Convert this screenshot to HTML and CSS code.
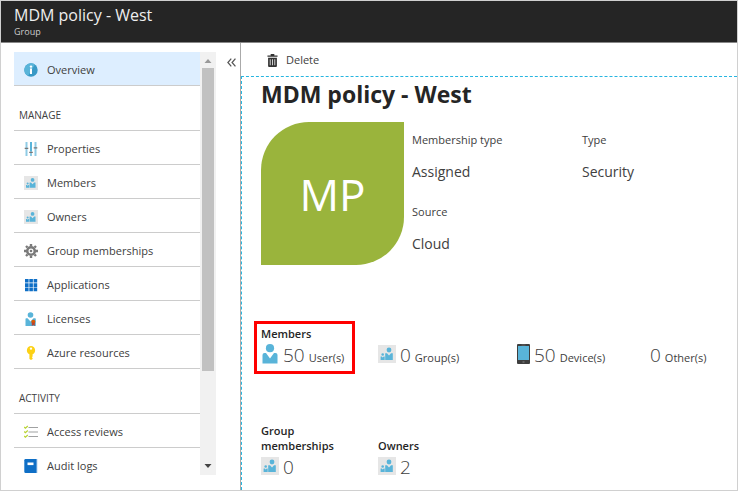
FILE: index.html
```html
<!DOCTYPE html>
<html lang="en">
<head>
<meta charset="utf-8">
<title>MDM policy - West</title>
<link rel="stylesheet" href="styles.css">
</head>
<body>
<svg class="defs" aria-hidden="true">
  <symbol id="people" viewBox="0 0 18 18">
    <path fill="#e6e6e6" d="M0 0h18v18H0z"/>
    <circle cx="11" cy="5" r="2.400" fill="#59b4d9"/>
    <path fill="#59b4d9" d="M7.200 8.200h1.800L11 10.600l2-2.400h1.800V15H7.200z"/>
    <circle cx="4.700" cy="9.500" r="1.300" fill="#59b4d9"/>
    <path fill="#59b4d9" d="M2.600 11.500h1.200L4.700 12.600l1-1.100h1V15H2.600z"/>
  </symbol>
  <symbol id="user" viewBox="0 0 16 20">
    <circle cx="8" cy="4.200" r="4.100" fill="#59b4d9"/>
    <path fill="#59b4d9" d="M.5 11q0-2 2-2H4l4 5.500L12 9h1.500q2 0 2 2v8.500H.5z"/>
  </symbol>
</svg>
<div class="app">
  <header class="top">
    <h1 class="top-title">MDM policy - West</h1>
    <p class="top-sub">Group</p>
  </header>
  <div class="body">
    <aside class="side">
      <nav class="menu">
        <a class="item active" href="#overview"><svg class="icon" viewBox="0 0 14 14"><circle cx="7" cy="7" r="6.700" fill="#3999c6"/><path fill="#59b4d9" d="M2 2.500A6.700 6.700 0 0 1 11 1.600L4 13A6.700 6.700 0 0 1 2 2.500z"/><circle cx="7" cy="3.600" r="1.200" fill="#fff"/><path fill="#fff" d="M6 5.500h2v5.500H6z"/></svg>Overview</a>
        <h2 class="group">MANAGE</h2>
        <a class="item" href="#properties"><svg class="icon" viewBox="0 0 14 14"><path fill="#8fcbe5" d="M1.500 0h2v14h-2zM6 0h2v14H6zM10.500 0h2v14h-2z"/><path fill="#59b4d9" d="M6 0h2v9H6z"/><path fill="#777" d="M.7 5.800h3.600v1.100H.7zM5.200 9.800h3.600v1.100H5.200zM9.700 5.300h3.600v1.100H9.700z"/></svg>Properties</a>
        <a class="item" href="#members"><svg class="icon"><use href="#people"/></svg>Members</a>
        <a class="item" href="#owners"><svg class="icon"><use href="#people"/></svg>Owners</a>
        <a class="item" href="#group-memberships"><svg class="icon" viewBox="0 0 14 14"><g fill="none" stroke="#7a7a7a"><circle cx="7" cy="7" r="3.800" stroke-width="2.600"/><path stroke-width="2.400" d="M7 0v2M7 12v2M0 7h2M12 7h2M2 2l1.500 1.500M10.500 10.500L12 12M12 2l-1.500 1.500M3.500 10.500L2 12"/></g><circle cx="7" cy="7" r="1.300" fill="#7a7a7a"/></svg>Group memberships</a>
        <a class="item" href="#applications"><svg class="icon" viewBox="0 0 14 14"><path fill="#0f6fc6" d="M1 1h3.600v3.600H1zM5.300 1h3.600v3.600H5.300zM9.600 1h3.600v3.600H9.600zM1 5.300h3.600v3.600H1zM5.300 5.300h3.600v3.600H5.300zM9.600 5.300h3.600v3.600H9.600zM1 9.600h3.600v3.600H1zM5.300 9.600h3.600v3.600H5.300zM9.600 9.600h3.600v3.600H9.600z"/></svg>Applications</a>
        <a class="item" href="#licenses"><svg class="icon" viewBox="0 0 14 14"><circle cx="6.500" cy="3" r="2.800" fill="#59b4d9"/><path fill="#59b4d9" d="M1.500 7q0-.8.800-.8h1.200L6.500 9.500 9.500 6.200H11q.8 0 .8.800v7H1.500z"/><circle cx="9.300" cy="9.700" r="2" fill="#dd5900"/><path fill="#b8432f" d="M7.800 10.500h3V14l-1.500-1-1.500 1z"/></svg>Licenses</a>
        <a class="item" href="#azure-resources"><svg class="icon" viewBox="0 0 14 14"><path fill="#fcd116" fill-rule="evenodd" d="M7 0a4.300 4.300 0 0 0-1.600 8.200V13L7 14l1.600-1v-1l-.8-.8.8-.8V8.200A4.300 4.300 0 0 0 7 0zm0 1.400a1.200 1.200 0 1 1 0 2.400 1.200 1.200 0 0 1 0-2.400z"/></svg>Azure resources</a>
        <h2 class="group">ACTIVITY</h2>
        <a class="item" href="#access-reviews"><svg class="icon" viewBox="0 0 14 14"><path fill="none" stroke="#a0a1a2" stroke-width="1.200" d="M4.500 2.500H14M4.500 7H14M4.500 11.500H14"/><path fill="none" stroke="#b8d432" stroke-width="1.200" d="M.2 2l1.200 1.200L3.800 1M.2 6.500l1.200 1.200 2.400-2.200M.2 11l1.200 1.200L3.800 10"/></svg>Access reviews</a>
        <a class="item" href="#audit-logs"><svg class="icon" viewBox="0 0 14 14"><path fill="#0f6fc6" d="M1.500 0H13v14H1.500q-1.200 0-1.200-1.200V1.200Q.3 0 1.500 0z"/><path fill="#5c9cd8" d="M12 0h1.200v14H12z"/><path fill="#fff" d="M3.500 3.500h6v2.600h-6z"/></svg>Audit logs</a>
      </nav>
      <div class="scroll" aria-hidden="true">
        <svg class="arrow" viewBox="0 0 16 16"><path fill="#999" d="M4.500 11h7L8 7z"/></svg>
        <div class="thumb"></div>
        <svg class="arrow" viewBox="0 0 16 16"><path fill="#444" d="M4.500 5h7L8 9z"/></svg>
      </div>
      <button class="collapse" type="button" aria-label="Collapse menu"><svg class="chevrons" viewBox="0 0 8 8"><path fill="none" stroke="#555" stroke-width="1.100" d="M3.800.5L.8 4l3 3.500M7.500.5l-3 3.500 3 3.500"/></svg></button>
    </aside>
    <main class="main">
      <div class="toolbar">
        <button class="delete" type="button"><svg class="trash" viewBox="0 0 12 14"><path fill="#333" d="M4 0h4v1.500h3.500V3H.5V1.500H4zM1.200 4h9.600v9q0 1-1 1H2.200q-1 0-1-1z"/><path fill="#ddd" d="M3 5.500h1v6.800H3zM5.500 5.500h1v6.800h-1zM8 5.500h1v6.800H8z"/></svg>Delete</button>
      </div>
      <div class="content">
        <h2 class="title">MDM policy - West</h2>
        <section class="summary">
          <div class="avatar">MP</div>
          <dl class="facts">
            <div><dt>Membership type</dt><dd>Assigned</dd></div>
            <div><dt>Type</dt><dd>Security</dd></div>
            <div><dt>Source</dt><dd>Cloud</dd></div>
          </dl>
        </section>
        <section class="stats">
          <div class="stat marked"><h3>Members</h3><p><svg class="person"><use href="#user"/></svg><b>50</b>User(s)</p></div>
          <div class="stat"><p><svg class="tile"><use href="#people"/></svg><b>0</b>Group(s)</p></div>
          <div class="stat"><p><svg class="phone" viewBox="0 0 13 20"><path fill="#3e3e3e" d="M1 0h11q1 0 1 1v18q0 1-1 1H1q-1 0-1-1V1q0-1 1-1z"/><path fill="#59b4d9" d="M1 2h11v14H1z"/><path fill="#888" d="M4.500.7h4v.6h-4zM5.500 17.500h2v1h-2z"/></svg><b>50</b>Device(s)</p></div>
          <div class="stat"><p><b>0</b>Other(s)</p></div>
        </section>
        <section class="stats">
          <div class="stat"><h3>Group memberships</h3><p><svg class="tile"><use href="#people"/></svg><b>0</b></p></div>
          <div class="stat"><h3>Owners</h3><p><svg class="tile"><use href="#people"/></svg><b>2</b></p></div>
        </section>
      </div>
    </main>
  </div>
</div>
</body>
</html>
```
FILE: styles.css
```css
* { box-sizing: border-box; margin: 0; padding: 0; }
body { font: 11px/16px "Open Sans", "Noto Sans", sans-serif; color: #404040; background: #fff; }
button { font: inherit; color: inherit; background: none; border: 0; }
a { color: inherit; text-decoration: none; }
.defs { position: absolute; width: 0; height: 0; }
.app { display: flex; flex-direction: column; height: 100vh; border: 1px solid #d0d0d0; overflow: hidden; }
.top { padding: 4px 13px; background: #252525; color: #eee; border-bottom: 1px solid #888; }
.top-title { font-size: 16px; line-height: 20px; font-weight: 400; }
.top-sub { font-size: 9px; line-height: 13px; color: #ccc; }
.body { flex: 1; display: flex; min-height: 0; }
.side { display: flex; flex: none; padding: 9px 0 15px 13px; width: 239px; }
.menu { flex: 1; overflow: hidden; }
.item { display: flex; align-items: center; gap: 9px; height: 34px; padding: 2px 0 0 10px; border-bottom: 1px solid #ccc; }
.active { background: #def; }
.icon { width: 14px; height: 14px; flex: none; }
.group { height: 45px; padding: 21px 5px 0; font-size: 10px; line-height: 16px; font-weight: 400; border-bottom: 1px solid #ccc; }
.scroll { display: flex; flex-direction: column; width: 16px; background: #f1f1f1; }
.arrow { width: 16px; height: 16px; flex: none; }
.thumb { flex: 0 1 303px; margin: 0 2px auto; background: #c1c1c1; }
.collapse { align-self: flex-start; width: 24px; padding: 3px 4px 0 11px; }
.chevrons { width: 9px; height: 9px; }
.main { flex: 1; min-width: 0; display: flex; flex-direction: column; border-left: 1px solid #aaa; }
.toolbar { height: 33px; padding: 9px 26px 0; }
.delete { display: flex; align-items: center; gap: 8px; }
.trash { width: 11px; height: 13px; }
.content { flex: 1; padding: 0 19px; border: 1px dashed #27b5e0; border-width: 1px 0 0 1px; }
.title { font-size: 23px; line-height: 34px; font-weight: 700; color: #252525; }
.summary { display: flex; gap: 8px; padding-top: 11px; }
.avatar { display: grid; place-items: center; width: 143px; height: 143px; flex: none; border-radius: 48px 0; background: #9ab43c; color: #fff; font-size: 44px; font-weight: 400; }
.facts { display: grid; grid-template-columns: 170px 1fr; row-gap: 22px; flex: 1; align-content: start; padding-top: 10px; }
dd { padding-top: 14px; font-size: 14px; line-height: 20px; }
.stats { display: grid; grid-template-columns: 117px 139px 133px 1fr; align-items: end; padding-top: 61px; }
.stats + .stats { padding-top: 57px; }
.stat { width: 94px; }
.stat h3 { font-size: 11px; line-height: 15px; font-weight: 600; color: #252525; }
.stat p { display: flex; align-items: baseline; gap: 4px; height: 25px; line-height: 28px; white-space: nowrap; }
.stat b { font-size: 19px; font-weight: 300; }
.marked { position: relative; }
.marked::after { content: ""; position: absolute; inset: -5px 0 -8px -7px; border: 3px solid #f00; }
.person, .tile, .phone { align-self: center; flex: none; }
.person { width: 18px; height: 20px; }
.tile { width: 18px; height: 18px; }
.phone { width: 13px; height: 20px; }
```
